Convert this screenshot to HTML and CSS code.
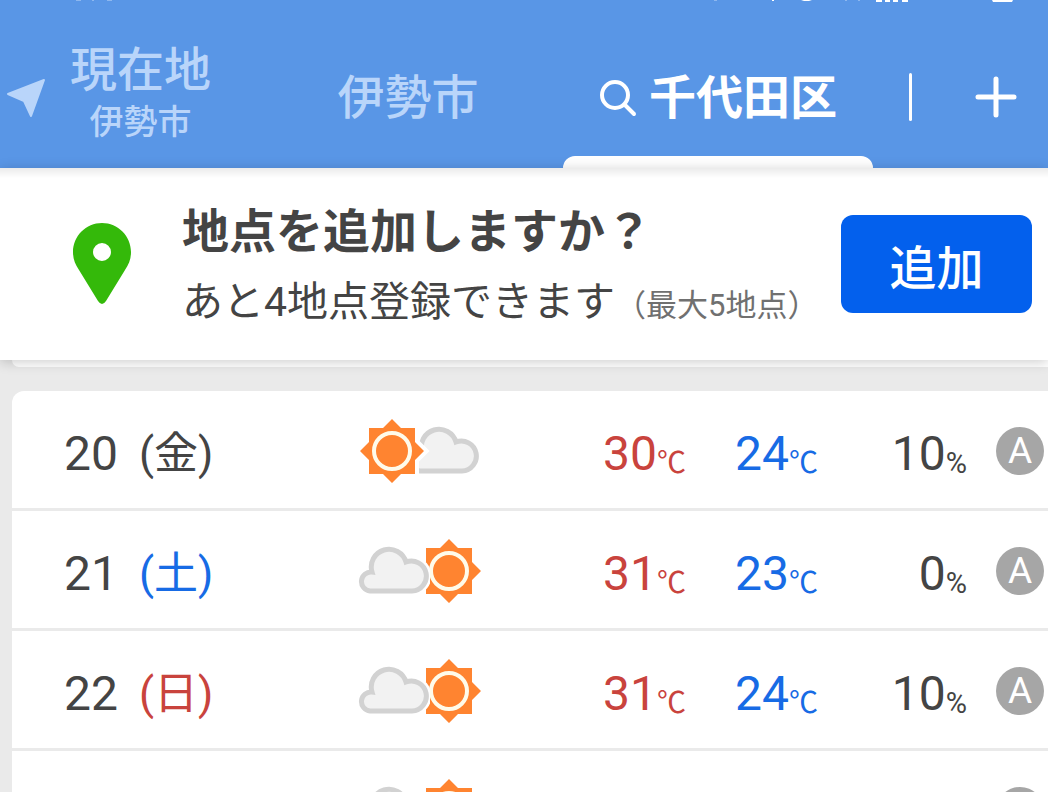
FILE: index.html
```html
<!DOCTYPE html>
<html lang="ja">

<head>
    <meta charset="UTF-8">
    <meta name="viewport" content="width=device-width, initial-scale=1.0">
    <title>千代田区の天気</title>
    <link rel="stylesheet" href="styles.css">
</head>

<body>
    <!-- Shared icons -->
    <svg class="sprite" aria-hidden="true">
        <symbol id="sun" viewBox="0 0 64 64">
            <path d="M9 9h14l9-9 9 9h14v14l9 9-9 9v14H41l-9 9-9-9H9V41l-9-9 9-9z" fill="#ff8430" />
            <circle cx="32" cy="32" r="18" fill="none" stroke="#fffbea" stroke-width="4" />
        </symbol>
        <symbol id="cloud" viewBox="0 0 72 64">
            <path d="M12 52A9 9 0 0 1 14 33A17 17 0 1 1 48 23A15 15 0 1 1 54 52Z" fill="#f2f2f2" stroke="#fff" stroke-width="10" />
            <path d="M12 52A9 9 0 0 1 14 33A17 17 0 1 1 48 23A15 15 0 1 1 54 52Z" fill="#f2f2f2" stroke="#d2d2d2" stroke-width="5" />
        </symbol>
        <symbol id="sun-cloud" viewBox="0 0 124 64">
            <use href="#cloud" x="50" width="72" height="64" />
            <path d="M11 9h14l9-9 9 9h14v14l9 9-9 9v14H43l-9 9-9-9H11V41l-9-9 9-9z" fill="#fff" stroke="#fff" stroke-width="8" />
            <use href="#sun" x="2" width="64" height="64" />
        </symbol>
        <symbol id="cloud-sun" viewBox="0 0 124 64">
            <use href="#sun" x="59" width="64" height="64" />
            <use href="#cloud" width="72" height="64" />
        </symbol>
    </svg>

    <header class="header">
        <svg class="status" viewBox="0 0 1048 2" preserveAspectRatio="none" aria-hidden="true">
            <path d="M76 0h5v1h-5zM92 0h2v1h-2zM107 0h5v1h-5zM714 0h3v1h-3zM845 0h2v1h-2zM858 0h2v1h-2z" fill="#8db7ef" />
            <path d="M772 0h2v1h-2zM801 0h11l-3 1h-5zM876 0h6v2h-6zM885 0h5v2h-5zM893 0h5v2h-5zM902 0h6v2h-6zM992 0h21l-1 2h-19z" fill="#fff" />
        </svg>
        <nav class="tabs">
            <a class="tab tab-current" href="#">
                <svg class="icon-arrow" viewBox="0 0 40 40">
                    <path d="M2 16 38 2 25 38 18 23z" fill="#b9d5fa" stroke="#b9d5fa" stroke-width="2" stroke-linejoin="round" />
                </svg>
                <span class="tab-text">
                    現在地
                    <small>伊勢市</small>
                </span>
            </a>
            <a class="tab" href="#">伊勢市</a>
            <a class="tab active" href="#">
                <svg class="icon-search" viewBox="0 0 38 38">
                    <circle cx="16" cy="16" r="13" fill="none" stroke="#fff" stroke-width="4" />
                    <path d="M26 26 35 35" stroke="#fff" stroke-width="4" stroke-linecap="round" />
                </svg>
                千代田区
            </a>
        </nav>
        <button class="add-tab" aria-label="地点を追加">
            <svg viewBox="0 0 42 42">
                <path d="M21 3v36M3 21h36" stroke="#fff" stroke-width="5" stroke-linecap="round" />
            </svg>
        </button>
    </header>

    <section class="banner">
        <svg class="icon-pin" viewBox="0 0 58 82">
            <path fill="#34b90a" fill-rule="evenodd" d="M29 0C13 0 0 13 0 29c0 7 2 12 6 18l19 31q4 6 8 0l19-31c4-6 6-11 6-18C58 13 45 0 29 0zM29 20a9 9 0 1 1 0 18 9 9 0 0 1 0-18z" />
        </svg>
        <div class="banner-text">
            <h2>地点を追加しますか？</h2>
            <p>あと4地点登録できます<small>（最大5地点）</small></p>
        </div>
        <button class="add-button">追加</button>
    </section>

    <main>
        <div class="card card-end"></div>
        <div class="card">
            <table class="forecast">
                <tr>
                    <td class="day">20</td>
                    <td class="week">(金)</td>
                    <td class="weather"><svg><use href="#sun-cloud" /></svg></td>
                    <td class="high">30<span>℃</span></td>
                    <td class="low">24<span>℃</span></td>
                    <td class="rain">10<span>%</span></td>
                    <td class="rank"><span>A</span></td>
                </tr>
                <tr>
                    <td class="day">21</td>
                    <td class="week sat">(土)</td>
                    <td class="weather"><svg><use href="#cloud-sun" /></svg></td>
                    <td class="high">31<span>℃</span></td>
                    <td class="low">23<span>℃</span></td>
                    <td class="rain">0<span>%</span></td>
                    <td class="rank"><span>A</span></td>
                </tr>
                <tr>
                    <td class="day">22</td>
                    <td class="week sun">(日)</td>
                    <td class="weather"><svg><use href="#cloud-sun" /></svg></td>
                    <td class="high">31<span>℃</span></td>
                    <td class="low">24<span>℃</span></td>
                    <td class="rain">10<span>%</span></td>
                    <td class="rank"><span>A</span></td>
                </tr>
                <tr>
                    <td class="day"></td>
                    <td class="week"></td>
                    <td class="weather"><svg><use href="#cloud-sun" /></svg></td>
                    <td class="high"></td>
                    <td class="low"></td>
                    <td class="rain"></td>
                    <td class="rank"><span></span></td>
                </tr>
            </table>
        </div>
    </main>
</body>

</html>
```
FILE: styles.css
```css
* {
    box-sizing: border-box;
}

body {
    margin: 0;
    height: 100vh;
    overflow: hidden;
    background-color: #eaeaea;
    color: #444;
    font-family: Roboto, "Noto Sans CJK JP", sans-serif;
}

button {
    border: none;
    font-family: inherit;
    cursor: pointer;
}

svg {
    display: block;
    flex-shrink: 0;
}

.sprite {
    position: absolute;
    width: 0;
    height: 0;
}

/* Header */
.header {
    position: relative;
    display: flex;
    align-items: center;
    height: 168px;
    background-color: #5996e6;
}

.status {
    position: absolute;
    top: 0;
    left: 0;
    width: 100%;
    height: 2px;
}

.tabs {
    flex: 1;
    display: grid;
    grid-template-columns: 253fr 310fr 310fr;
    height: 100%;
}

.tab {
    display: flex;
    align-items: center;
    justify-content: center;
    padding-top: 28px;
    color: #b9d5fa;
    font-size: 47px;
    font-weight: 500;
    line-height: 56px;
    text-decoration: none;
    white-space: nowrap;
}

.tab-current {
    justify-content: flex-start;
    gap: 24px;
    padding-left: 6px;
}

.tab-text {
    padding-bottom: 8px;
    text-align: center;
}

.tab-text small {
    display: block;
    font-size: 34px;
    line-height: 48px;
}

.tab.active {
    position: relative;
    gap: 12px;
    color: #fff;
    font-weight: bold;
}

.tab.active::after {
    content: "";
    position: absolute;
    left: 0;
    right: 0;
    bottom: 0;
    height: 12px;
    border-radius: 12px 12px 0 0;
    background-color: #fff;
}

.icon-arrow {
    width: 40px;
    height: 40px;
}

.icon-search {
    width: 38px;
    height: 38px;
}

.add-tab {
    display: flex;
    align-items: center;
    justify-content: space-between;
    width: 175px;
    margin-top: 26px;
    padding: 0 31px 0 36px;
    background: none;
}

.add-tab::before {
    content: "";
    width: 3px;
    height: 48px;
    border-radius: 2px;
    background-color: #fff;
}

.add-tab svg {
    width: 42px;
    height: 42px;
}

/* Banner */
.banner {
    position: relative;
    display: flex;
    align-items: center;
    height: 192px;
    padding: 0 16px 0 73px;
    background: linear-gradient(#ebebeb, #fff 10px);
    box-shadow: 0 2px 12px rgba(0, 0, 0, 0.2);
}

.icon-pin {
    width: 58px;
    height: 82px;
}

.banner-text {
    flex: 1;
    margin-left: 51px;
    padding-top: 8px;
    white-space: nowrap;
}

.banner-text h2 {
    margin: 0;
    font-size: 47px;
    line-height: 72px;
}

.banner-text p {
    margin: 0;
    font-size: 41px;
    line-height: 68px;
}

.banner-text small {
    color: #707070;
    font-size: 31px;
}

.add-button {
    width: 191px;
    height: 98px;
    border-radius: 12px;
    background-color: #0360ed;
    color: #fff;
    font-size: 47px;
    font-weight: 500;
}

/* Forecast list */
.card {
    margin-left: 12px;
    border-radius: 12px 0 0 12px;
    background-color: #fff;
}

.card-end {
    height: 7px;
    margin-bottom: 24px;
    border-radius: 0 0 0 12px;
}

.forecast {
    width: 100%;
    table-layout: fixed;
    border-collapse: separate;
    border-spacing: 0;
}

.forecast td {
    height: 120px;
    padding: 8px 0 0;
    border-bottom: 3px solid #eaeaea;
    font-size: 48px;
    line-height: 60px;
    white-space: nowrap;
}

.forecast .day {
    width: 127px;
    padding-left: 52px;
}

.forecast .week {
    width: 219px;
    font-size: 44px;
}

.forecast .weather,
.forecast .rank {
    padding-top: 2px;
}

.weather svg {
    width: 124px;
    height: 64px;
}

.high {
    width: 132px;
}

.low {
    width: 131px;
}

.rain {
    width: 101px;
    text-align: right;
}

.high span,
.low span,
.rain span {
    font-size: 29px;
    line-height: 30px;
    vertical-align: -3px;
}

.high,
.sun {
    color: #c9433d;
}

.low,
.sat {
    color: #176be5;
}

.rank {
    width: 81px;
}

.rank span {
    display: block;
    width: 48px;
    height: 48px;
    margin-left: 29px;
    border-radius: 50%;
    background-color: #a6a6a6;
    color: #fff;
    font-size: 37px;
    line-height: 48px;
    text-align: center;
}
```
